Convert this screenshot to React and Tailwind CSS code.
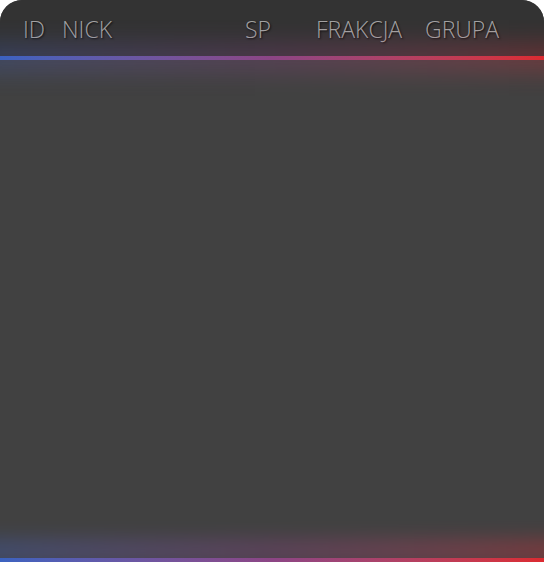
import React from "react";

const columns = [
  { label: "ID", width: "w-[39px]" },
  { label: "NICK", width: "w-[183px]" },
  { label: "SP", width: "w-[71px]" },
  { label: "FRAKCJA", width: "w-[109px]" },
  { label: "GRUPA", width: "w-[100px]" },
];

const lineGradient =
  "bg-gradient-to-r from-[#3b62c0] via-[#8c4585] to-[#dc2a30]";

function GlowLine({ glowUp }) {
  return (
    <div className="relative h-[4px]">
      <div
        className={
          "absolute -left-[24px] -right-[24px] " +
          lineGradient +
          (glowUp
            ? " bottom-0 h-[22px] opacity-40 blur-[10px]"
            : " -top-[12px] h-[28px] opacity-30 blur-[12px]")
        }
      />
      <div className={"relative h-[4px] " + lineGradient} />
    </div>
  );
}

export default function App() {
  return (
    <div className="bg-white h-[562px] overflow-hidden">
      <div className="flex flex-col h-full rounded-t-[22px] overflow-hidden bg-[#414141]">
        <div className="bg-[#333333] h-[56px] flex items-center pl-[23px] pt-[3px]">
          {columns.map((col) => (
            <div
              key={col.label}
              className={
                col.width +
                " text-[23px] font-light text-[#a3a3a3] [text-shadow:1px_1px_2px_rgba(0,0,0,0.8)]"
              }
              style={{ fontFamily: '"Open Sans", sans-serif' }}
            >
              {col.label}
            </div>
          ))}
        </div>
        <GlowLine />
        <div className="flex-1" />
        <GlowLine glowUp />
      </div>
    </div>
  );
}
